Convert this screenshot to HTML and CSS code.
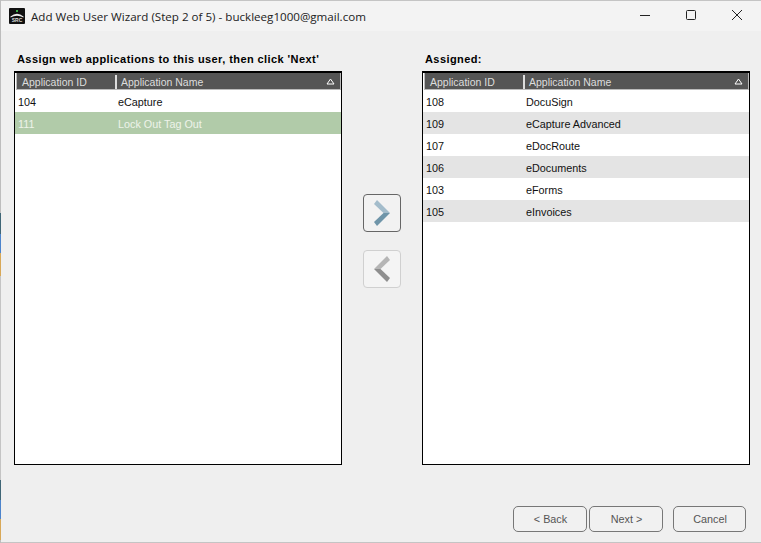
FILE: index.html
```html
<!DOCTYPE html>
<html lang="en">

<head>
    <meta charset="UTF-8">
    <title>Add Web User Wizard</title>
    <link rel="stylesheet" href="styles.css">
</head>

<body>
    <div class="kant"></div>
    <div class="vindue">
        <header class="titel">
            <svg class="logo" width="16" height="16" viewBox="0 0 16 16">
                <rect width="16" height="16" rx="1" fill="#111" />
                <rect x="7" y="2" width="2" height="2" fill="#3cb04a" />
                <path d="M1.5 8.5 Q8 3 14.5 8.5 L14.5 9.5 Q8 6 1.5 9.5Z" fill="#eee" />
                <text class="logotekst" x="8" y="14">SRC</text>
            </svg>
            <span class="titeltekst">Add Web User Wizard (Step 2 of 5) - buckleeg1000@gmail.com</span>
            <div class="vinduesknapper">
                <svg width="12" height="12" viewBox="0 0 12 12">
                    <path d="M1 5.5H11" stroke="#222" fill="none" />
                </svg>
                <svg width="12" height="12" viewBox="0 0 12 12">
                    <rect x="1.5" y=".5" width="9" height="9" rx="1" stroke="#222" fill="none" />
                </svg>
                <svg width="12" height="12" viewBox="0 0 12 12">
                    <path d="M1 0L11 10M11 0L1 10" stroke="#222" fill="none" />
                </svg>
            </div>
        </header>

        <main class="indhold">
            <section class="kolonne">
                <h2>Assign web applications to this user, then click 'Next'</h2>
                <div class="liste">
                    <div class="listehoved">
                        <span class="kol-id">Application ID</span>
                        <span class="kol-navn">Application Name</span>
                        <svg class="pil" width="9" height="7" viewBox="0 0 9 7">
                            <path d="M4.5 1L8 6H1Z" stroke="#fff" fill="none" />
                        </svg>
                    </div>
                    <div class="raekke"><span class="kol-id">104</span><span>eCapture</span></div>
                    <div class="raekke valgt"><span class="kol-id">111</span><span>Lock Out Tag Out</span></div>
                </div>
            </section>

            <div class="flytknapper">
                <button class="flyt">
                    <svg width="16" height="26" viewBox="0 0 16 26">
                        <path d="M3 0L16 13H9.5L0 4Z" fill="#a3bccb" />
                        <path d="M16 13L3 26L0 22L9.5 13Z" fill="#6f95a9" />
                    </svg>
                </button>
                <button class="flyt slaaet-fra">
                    <svg width="16" height="26" viewBox="0 0 16 26">
                        <path d="M13 0L0 13H6.5L16 4Z" fill="#b5b5b5" />
                        <path d="M0 13L13 26L16 22L6.5 13Z" fill="#8e8e8e" />
                    </svg>
                </button>
            </div>

            <section class="kolonne">
                <h2>Assigned:</h2>
                <div class="liste">
                    <div class="listehoved">
                        <span class="kol-id">Application ID</span>
                        <span class="kol-navn">Application Name</span>
                        <svg class="pil" width="9" height="7" viewBox="0 0 9 7">
                            <path d="M4.5 1L8 6H1Z" stroke="#fff" fill="none" />
                        </svg>
                    </div>
                    <div class="raekke"><span class="kol-id">108</span><span>DocuSign</span></div>
                    <div class="raekke lige"><span class="kol-id">109</span><span>eCapture Advanced</span></div>
                    <div class="raekke"><span class="kol-id">107</span><span>eDocRoute</span></div>
                    <div class="raekke lige"><span class="kol-id">106</span><span>eDocuments</span></div>
                    <div class="raekke"><span class="kol-id">103</span><span>eForms</span></div>
                    <div class="raekke lige"><span class="kol-id">105</span><span>eInvoices</span></div>
                </div>
            </section>
        </main>

        <footer class="bund">
            <button class="knap">&lt; Back</button>
            <button class="knap">Next &gt;</button>
            <button class="knap annuller">Cancel</button>
        </footer>
    </div>
</body>

</html>
```

FILE: styles.css
```css
html,
body {
    margin: 0;
    height: 100%;
    overflow: hidden;
}

body {
    display: flex;
    background-color: #efefef;
    font-family: "Liberation Sans", Arial, sans-serif;
    font-size: 10.5px;
    color: #111;
}

/* stump af vinduerne bagved, helt ude i venstre side */
.kant {
    width: 1px;
    flex: none;
    background: linear-gradient(to bottom,
            #bdbdbd 0, #bdbdbd 213px,
            #3f6676 213px, #3f6676 234px,
            #4d84cc 234px, #4d84cc 253px,
            #d8a858 253px, #d8a858 276px,
            #c4c4c4 276px, #c4c4c4 480px,
            #3f6676 480px, #3f6676 500px,
            #4d84cc 500px, #4d84cc 519px,
            #d8a858 519px, #d8a858 540px,
            #bdbdbd 540px);
}

.vindue {
    flex: 1;
    display: flex;
    flex-direction: column;
    min-width: 0;
    border-top: 1px solid #c4c4c4;
    border-bottom: 1px solid #c4c4c4;
    box-sizing: border-box;
}

.titel {
    height: 30px;
    flex: none;
    display: flex;
    align-items: center;
    background-color: #f3f3f3;
    padding-left: 8px;
}

.logo {
    margin-right: 6px;
}

.logotekst {
    font-size: 5px;
    font-weight: bold;
    text-anchor: middle;
    fill: #ddd;
}

.titeltekst {
    font-family: "Open Sans", sans-serif;
    font-size: 11.6px;
    color: #222;
}

.vinduesknapper {
    margin-left: auto;
    display: flex;
    gap: 34px;
    padding-right: 18px;
}

.indhold {
    display: flex;
    padding: 22px 10px 0 13px;
}

.kolonne {
    width: 328px;
}

h2 {
    margin: 0 0 5px 3px;
    height: 13px;
    font-size: 11px;
    letter-spacing: .42px;
    line-height: 13px;
    color: #000;
}

.liste {
    height: 394px;
    box-sizing: border-box;
    border: 1px solid #000;
    border-top-width: 2px;
    background-color: #fff;
}

.listehoved {
    display: flex;
    align-items: center;
    height: 17px;
    padding-top: 1px;
    margin-left: 1px;
    background-color: #555;
    color: #ddd;
    position: relative;
    border: 1px solid #bbb;
    border-width: 0 1px 1px;
    box-sizing: border-box;
}

.listehoved .kol-id {
    width: 98px;
    padding-left: 5px;
    box-sizing: border-box;
}

.kol-navn {
    border-left: 2px solid #ddd;
    padding-left: 4px;
    line-height: 14px;
}

.pil {
    position: absolute;
    right: 5px;
    top: 5px;
}

.raekke {
    display: flex;
    align-items: center;
    height: 22px;
    box-sizing: border-box;
    padding: 2px 0 0 3px;
    font-size: 10.8px;
    color: #111;
}

.raekke .kol-id {
    width: 100px;
}

.lige {
    background-color: #e4e4e4;
}

.valgt {
    background-color: #b1cba9;
    color: #eef3ea;
}

.flytknapper {
    width: 80px;
    flex: none;
    display: flex;
    flex-direction: column;
    align-items: center;
    gap: 18px;
    padding-top: 141px;
}

.flyt {
    width: 38px;
    height: 38px;
    padding: 0;
    display: flex;
    align-items: center;
    justify-content: center;
    background-color: #f2f2f2;
    border: 1px solid #666;
    border-radius: 4px;
}

.slaaet-fra {
    background-color: #f4f4f4;
    border-color: #d0d0d0;
}

.bund {
    margin-top: auto;
    display: flex;
    padding: 0 15px 10px 0;
    justify-content: flex-end;
    gap: 2px;
}

.knap {
    width: 74px;
    height: 26px;
    padding: 0 0 0 1px;
    font-family: "Liberation Sans", Arial, sans-serif;
    font-size: 10.8px;
    color: #555;
    background-color: #f1f1f1;
    border: 1px solid #777;
    border-radius: 5px;
}

.annuller {
    width: 73px;
    margin-left: 8px;
}
```
